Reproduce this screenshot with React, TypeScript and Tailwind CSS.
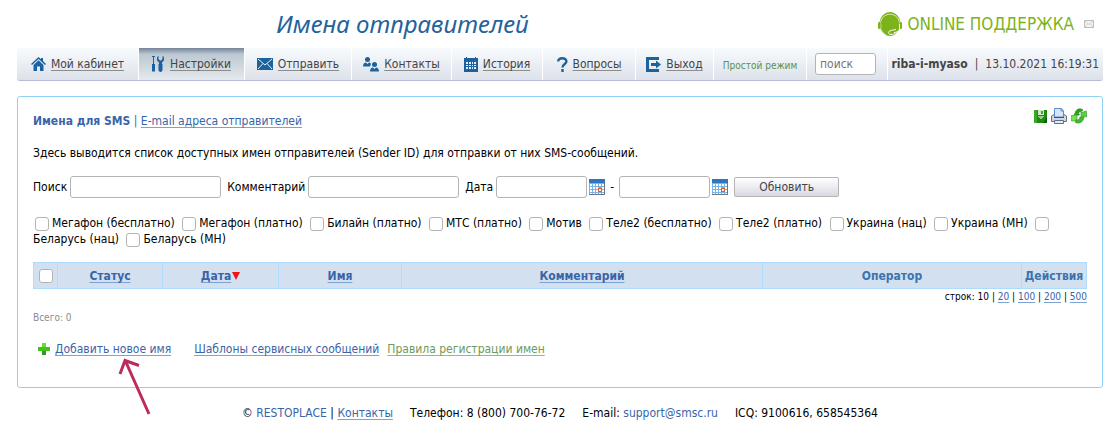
import { useState } from 'react';
import type { ReactNode } from 'react';
import clsx from 'clsx';

const linkBase = 'underline decoration-1 underline-offset-2 [text-decoration-skip-ink:none]';
const link = `${linkBase} text-[#3a64a8] decoration-[#7da3d4]`;
const field = 'h-[22px] rounded-[3px] border border-[#b4b4b4] bg-white px-1 outline-none';
const checkbox =
  'm-0 size-[14px] appearance-none rounded-[3px] border border-[#b4b4b4] bg-white checked:bg-[#3a64a8]';

function HomeIcon() {
  return (
    <svg width="15" height="14" viewBox="0 0 15 14" fill="#1c629f">
      <path d="M7.5 0 0 7l1 1 6.500-6 6.500 6 1-1-3-3V1h-2v1.300z" />
      <path d="M7.500 3.200 2.500 8v6H6V9.500h3V14h3.500V8z" />
    </svg>
  );
}

function ToolsIcon() {
  return (
    <svg width="13" height="16" viewBox="0 0 13 16" fill="#1c629f">
      <path d="M0 0h3v1H2v7h1v7.500H0V8h1V1H0z" />
      <path d="M5 1l1.500-1v3L8 4.500h1L10.500 3V0L12 1v3.500L10 6.500V8h.5v6.500L9 16H8l-1.500-1.500V8H7V6.500L5 4.500z" />
    </svg>
  );
}

function MailIcon() {
  return (
    <svg width="16" height="12" viewBox="0 0 16 12">
      <path d="M0 0h16v12H0z" fill="#1c629f" />
      <path d="M1 1l7 6 7-6M1 11l5-5.500M15 11l-5-5.500" fill="none" stroke="#e6ebf2" />
    </svg>
  );
}

function PeopleIcon() {
  return (
    <svg width="16" height="15" viewBox="0 0 16 15" fill="#1c629f">
      <circle cx="4.500" cy="2.500" r="2.500" />
      <path d="M0 9.500C0 7 1.500 5.500 3 5.500L4.500 7 6 5.500c1 0 1.500.5 2 1.500L7 9.500z" />
      <circle cx="11.500" cy="7.500" r="2.500" />
      <path d="M7 14.500C7 12 8.500 10.500 10 10.500l1.500 1.500 1.500-1.500c1.500 0 3 1.500 3 4z" />
    </svg>
  );
}

function HistoryIcon() {
  return (
    <svg width="14" height="15" viewBox="0 0 14 15" shapeRendering="crispEdges">
      <path d="M0 1h2V0h1v1h8V0h1v1h2v14H0z" fill="#1c629f" />
      <path
        d="M2 5h2v2H2zM5 5h2v2H5zM8 5h1v2H8zM10 5h2v2h-2zM2 8h2v1H2zM5 8h2v1H5zM8 8h1v1H8zM10 8h2v1h-2zM2 10h2v2H2zM5 10h2v2H5zM8 10h1v2H8zM10 10h2v2h-2z"
        fill="#e9edf3"
      />
    </svg>
  );
}

function QuestionIcon() {
  return (
    <svg width="11" height="15" viewBox="0 0 11 15" fill="none" stroke="#1c629f" strokeWidth="2.400">
      <path d="M1.200 4.500C1.200 2 3 1.200 5.200 1.200s4.200 1 4.200 3.200C9.400 7 5.500 7 5.500 10.500" />
      <path d="M5.500 12v3" />
    </svg>
  );
}

function ExitIcon() {
  return (
    <svg width="15" height="15" viewBox="0 0 15 15" fill="#1c629f">
      <path d="M0 0h13v3H3v9h10v3H0z" />
      <path d="M5 6h5V3.500L15 7.500 10 11.500V9H5z" />
    </svg>
  );
}

function HeadsetIcon() {
  return (
    <svg width="24" height="24" viewBox="0 0 24 24">
      <ellipse cx="12" cy="12" rx="10.500" ry="12" fill="#7db31a" />
      <path d="M2.500 12C2.500 6 7 2.200 12 2.200s9.500 3.800 9.500 9.800" fill="none" stroke="#fff" strokeWidth=".7" />
      <path d="M2.800 12v5.500C4 20 6 22 8 23" fill="none" stroke="#fff" strokeWidth=".7" />
      <rect x="0" y="10" width="2.500" height="7" rx="1.200" fill="#7db31a" />
      <rect x="21.500" y="10" width="2.500" height="7" rx="1.200" fill="#7db31a" />
      <path d="M21.500 12v5c-1 2.500-3 3.500-5.500 3.500" fill="none" stroke="#fff" />
      <path d="M18 17.500c-2 .5-5.500.5-7 2-1 1.500 0 3 2 3s3.500-.5 4-2" fill="none" stroke="#fff" />
      <path d="M22.500 17.500V24H16l1-2z" fill="#fff" />
    </svg>
  );
}

function EnvelopeIcon() {
  return (
    <svg width="10" height="8" viewBox="0 0 10 8" fill="none" stroke="#bdbdbd">
      <path d="M.5.5h9v7h-9z" fill="#f6f6f6" />
      <path d="M1 1l4 3.500L9 1M1 7l2.500-3M9 7L6.500 4" strokeWidth=".7" />
    </svg>
  );
}

function SaveIcon() {
  return (
    <svg width="13" height="13" viewBox="0 0 13 13">
      <path d="M0 0h13v13H0z" fill="#1f8a12" />
      <path d="M0 0h3v13H0z" fill="#3aa822" />
      <path d="M9 13l4-6v6z" fill="#0d5c0a" />
      <path d="M4 0h6v5H4z" fill="#cfe8c8" />
      <path d="M7 1h2v3H7z" fill="#4f9c45" />
      <path d="M4 6h6v1H9v1H8v1H6V8H5V7H4z" fill="#8fd180" />
    </svg>
  );
}

function PrintIcon() {
  return (
    <svg width="16" height="16" viewBox="0 0 16 16">
      <path d="M.5 8L3 6.500h10L15.500 8v5.500H.5z" fill="#d4d6dc" stroke="#6c7078" />
      <path d="M3.500 9V.5h7L12.500 3v6z" fill="#d3e6fb" stroke="#5a8fce" />
      <path d="M10 .5V3h2.500" fill="none" stroke="#5a8fce" />
      <path d="M3 9.500h10" stroke="#4c5058" />
      <path d="M3.500 12.500h9v3h-9z" fill="#dfeafa" stroke="#5b6f92" />
    </svg>
  );
}

function RefreshIcon() {
  return (
    <svg width="16" height="16" viewBox="0 0 16 16" strokeWidth=".6">
      <path d="M4 5C5 1 9-.5 12 2l-2.500 2C8 3.500 7 5 8.500 7L3 7.500z" fill="#2fa31c" stroke="#1f8a12" />
      <path d="M10 4.500L15.500 3l.2 6L10 8.500z" fill="#5fce42" stroke="#2d9a1f" />
      <path d="M.3 7.500L6 7v6L.5 13z" fill="#7ade5c" stroke="#2d9a1f" />
      <path d="M5 11.500c2 1 3.500 0 4-2.500l4 .5c-1 5-5 6.500-8.500 5z" fill="#45b82c" stroke="#1f8a12" />
    </svg>
  );
}

function CalendarIcon() {
  return (
    <svg width="16" height="16" viewBox="0 0 16 16" fill="none">
      <path d="M0 0h16v16H0z" fill="#6f767d" />
      <path d="M0 0h15v15H0z" fill="#78b4ea" />
      <path d="M0 0h16v4H0z" fill="#2f77bd" />
      <path
        d="M1 5h2v2H1zM4 5h2v2H4zM7 5h2v2H7zM10 5h2v2h-2zM13 5h2v2h-2zM1 8h2v2H1zM4 8h2v2H4zM7 8h2v2H7zM13 8h2v2h-2zM1 11h2v2H1zM4 11h2v2H4zM7 11h2v2H7zM13 11h2v2h-2zM1 14h2v1H1zM4 14h2v1H4zM7 14h2v1H7zM10 14h2v1h-2zM13 14h2v1h-2z"
        fill="#fff"
      />
      <path d="M9.500 9.500h3v3h-3z" fill="#fff" stroke="#e8501e" />
    </svg>
  );
}

function PlusIcon() {
  return (
    <svg width="12" height="12" viewBox="0 0 12 12">
      <path d="M4 0h4v4h4v4H8v4H4V8H0V4h4z" fill="#43c01c" />
      <path d="M4 0h4v4H4z" fill="#5be62a" />
      <path d="M4 8h4v4H4z" fill="#35952a" />
    </svg>
  );
}

const menu = [
  { label: 'Мой кабинет', icon: <HomeIcon /> },
  { label: 'Настройки', icon: <ToolsIcon />, active: true },
  { label: 'Отправить', icon: <MailIcon /> },
  { label: 'Контакты', icon: <PeopleIcon /> },
  { label: 'История', icon: <HistoryIcon /> },
  { label: 'Вопросы', icon: <QuestionIcon /> },
  { label: 'Выход', icon: <ExitIcon /> },
];

const operators = [
  'Мегафон (бесплатно)',
  'Мегафон (платно)',
  'Билайн (платно)',
  'МТС (платно)',
  'Мотив',
  'Теле2 (бесплатно)',
  'Теле2 (платно)',
  'Украина (нац)',
  'Украина (МН)',
  'Беларусь (нац)',
  'Беларусь (МН)',
];

function MenuItem({ label, icon, active }: { label: string; icon: ReactNode; active?: boolean }) {
  return (
    <a
      href="#"
      className={clsx(
        'flex items-center justify-center gap-[5px] border-r border-white text-[#444]',
        active && 'bg-linear-to-b from-[#76849a] from-0% via-[#bcc8d2] via-20% to-[#e4eaee]'
      )}
    >
      {icon}
      <span className={`${linkBase} decoration-[#8c8c8c]`}>{label}</span>
    </a>
  );
}

function DateField({ id, label }: { id: string; label: string }) {
  return (
    <span className="flex items-center gap-[2px]">
      <input id={id} type="text" aria-label={label} className={`${field} w-[91px]`} />
      <button type="button" aria-label="Календарь">
        <CalendarIcon />
      </button>
    </span>
  );
}

export default function App() {
  const [selected, setSelected] = useState<string[]>([]);

  const toggle = (name: string) => {
    setSelected((prev) => (prev.includes(name) ? prev.filter((n) => n !== name) : [...prev, name]));
  };

  return (
    <div className="bg-white px-[17px] font-['DejaVu_Sans_Condensed','Noto_Sans',sans-serif] text-xs leading-4 text-black">
      <header className="flex h-12 items-center">
        <h1 className="w-[71%] text-center font-['Noto_Sans',sans-serif] text-2xl text-[#24629c] italic">
          Имена отправителей
        </h1>
        <div className="flex flex-1 items-center justify-end gap-[10px] pr-[9px]">
          <a href="#" className="flex items-center gap-[5px] text-[17px] whitespace-nowrap text-[#7db31a]">
            <HeadsetIcon />
            ONLINE ПОДДЕРЖКА
          </a>
          <EnvelopeIcon />
        </div>
      </header>

      <nav className="grid h-[33px] grid-cols-[122fr_106fr_107fr_100fr_91fr_93fr_78fr_93fr_81fr_215fr] overflow-hidden rounded-[3px] border-b border-[#b9bcd6] bg-linear-to-b from-[#f8fbfd] to-[#dde1ea] whitespace-nowrap">
        {menu.map((item) => (
          <MenuItem key={item.label} {...item} />
        ))}
        <a
          href="#"
          className="flex items-center justify-center border-r border-white pt-1 text-[10px] text-[#5a9150]"
        >
          Простой режим
        </a>
        <div className="flex items-center border-r border-white pl-2">
          <input
            type="text"
            aria-label="Поиск"
            placeholder="поиск"
            className={`${field} w-[61px] placeholder:text-[#757575]`}
          />
        </div>
        <div className="flex items-center justify-end gap-[7px] pr-1 text-[#444]">
          <b>riba-i-myaso</b>
          <span>|</span>
          <span>13.10.2021 16:19:31</span>
        </div>
      </nav>

      <main className="mt-[15px] rounded-[3px] border border-[#8fd0f8] px-[15px] pt-4 pb-[30px]">
        <div className="flex justify-between">
          <div className="text-[#3a64a8]">
            <b>Имена для SMS</b> |{' '}
            <a href="#" className={link}>
              E-mail адреса отправителей
            </a>
          </div>
          <div className="-mt-[5px] flex h-4 items-center gap-1">
            <button type="button" aria-label="Сохранить">
              <SaveIcon />
            </button>
            <button type="button" aria-label="Печать">
              <PrintIcon />
            </button>
            <button type="button" aria-label="Обновить список">
              <RefreshIcon />
            </button>
          </div>
        </div>

        <p className="mt-4">
          Здесь выводится список доступных имен отправителей (Sender ID) для отправки от них SMS-сообщений.
        </p>

        <form
          className="mt-[15px] flex items-center gap-[6px]"
          onSubmit={(e) => e.preventDefault()}
        >
          <label className="flex items-center gap-[3px]">
            Поиск
            <input type="text" className={`${field} w-[151px]`} />
          </label>
          <label className="flex items-center gap-[3px]">
            Комментарий
            <input type="text" className={`${field} w-[151px]`} />
          </label>
          <div className="flex items-center gap-[3px]">
            <label htmlFor="date-from">Дата</label>
            <DateField id="date-from" label="Дата с" />
            <span className="px-[2px]">-</span>
            <DateField id="date-to" label="Дата по" />
          </div>
          <button
            type="submit"
            className="h-5 w-[105px] rounded-[2px] border border-[#b4b4b4] bg-linear-to-b from-white to-[#d9d9e4] text-[#444]"
          >
            Обновить
          </button>
        </form>

        <div className="mt-[17px]">
          {operators.map((name, i) => (
            <span key={name}>
              <input
                id={`op-${i}`}
                type="checkbox"
                checked={selected.includes(name)}
                onChange={() => toggle(name)}
                className={`${checkbox} mr-[3px] ml-[2px] inline-block align-middle`}
              />
              <label htmlFor={`op-${i}`} className="mr-[2px] whitespace-nowrap">
                {name}
              </label>{' '}
            </span>
          ))}
        </div>

        <table className="mt-[15px] w-full table-fixed border-collapse bg-[#d3e0ef] text-[#3b73ad] [&_th]:border [&_th]:border-[#aedcff] [&_th]:p-0">
          <colgroup>
            <col className="w-6" />
            <col className="w-[105px]" />
            <col className="w-[116px]" />
            <col className="w-[123px]" />
            <col className="w-[361px]" />
            <col />
            <col className="w-[65px]" />
          </colgroup>
          <thead>
            <tr className="h-[26px]">
              <th>
                <input
                  type="checkbox"
                  aria-label="Выбрать все"
                  className={`${checkbox} mx-auto block`}
                />
              </th>
              <th>
                <a href="#" className={link}>Статус</a>
              </th>
              <th>
                <a href="#" className={link}>Дата</a>
                <svg width="8" height="8" viewBox="0 0 8 8" className="ml-px inline-block">
                  <path d="M0 0h8L4 8z" fill="#f01414" />
                </svg>
              </th>
              <th>
                <a href="#" className={link}>Имя</a>
              </th>
              <th>
                <a href="#" className={link}>Комментарий</a>
              </th>
              <th>Оператор</th>
              <th>Действия</th>
            </tr>
          </thead>
        </table>

        <div className="text-right text-[10px]">
          строк: 10
          {[20, 100, 200, 500].map((n) => (
            <span key={n}>
              {' | '}
              <a href="#" className={link}>{n}</a>
            </span>
          ))}
        </div>
        <div className="mt-[5px] text-[10px] text-[#8c8c8c]">Всего: 0</div>

        <div className="mt-[15px] flex items-center pl-[5px]">
          <PlusIcon />
          <div className="relative ml-[5px]">
            <a href="#" className={link}>Добавить новое имя</a>
            <svg
              width="34"
              height="58"
              viewBox="0 0 34 58"
              fill="none"
              stroke="#bf2a5c"
              strokeWidth="3"
              className="pointer-events-none absolute top-[17px] left-[63px]"
            >
              <path d="M7 2l24 54M2 16L7 2.500 21 7.500" />
            </svg>
          </div>
          <a href="#" className={`${link} ml-[23px]`}>Шаблоны сервисных сообщений</a>
          <a href="#" className={`${linkBase} ml-2 text-[#6c9a5c] decoration-[#7fc878]`}>
            Правила регистрации имен
          </a>
        </div>
      </main>

      <footer className="mt-[17px] flex justify-center gap-[17px] pb-4">
        <span>
          © <span className="text-[#3a64a8]">RESTOPLACE</span> |{' '}
          <a href="#" className={link}>Контакты</a>
        </span>
        <span>Телефон: 8 (800) 700-76-72</span>
        <span>
          E-mail:{' '}
          <a href="mailto:support@smsc.ru" className="text-[#3a64a8]">support@smsc.ru</a>
        </span>
        <span>ICQ: 9100616, 658545364</span>
      </footer>
    </div>
  );
}
